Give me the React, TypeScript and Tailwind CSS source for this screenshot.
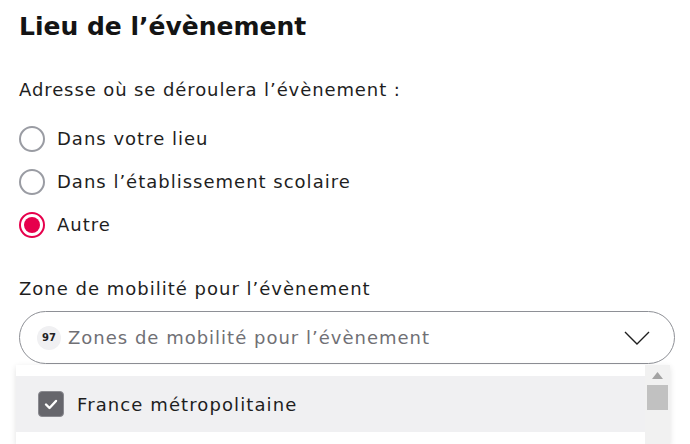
import React from "react";

const font = { fontFamily: '"DejaVu Sans", "Open Sans", sans-serif' };

function Radio({ label, checked }: { label: string; checked?: boolean }) {
  return (
    <label className="flex items-center gap-[12px] h-[43px] cursor-pointer">
      <span
        className={
          checked
            ? "w-[26px] h-[26px] rounded-full border-2 border-[#e6004c] flex items-center justify-center"
            : "w-[26px] h-[26px] rounded-full border-2 border-[#9a9ca3]"
        }
      >
        {checked && <span className="w-[16px] h-[16px] rounded-full bg-[#e6004c]" />}
      </span>
      <span className="text-[18px] tracking-[1px] text-[#1e1e1e]">{label}</span>
    </label>
  );
}

export default function App() {
  return (
    <div className="w-[690px] h-[444px] overflow-hidden bg-white text-[#1e1e1e]" style={font}>
      <div className="pl-[19px] pr-[15px] pt-[9px]">
        <h2 className="text-[25px] font-bold text-[#141414] leading-[36px]">Lieu de l’évènement</h2>

        <p className="mt-[32px] text-[18px] tracking-[0.9px] leading-[26px]">Adresse où se déroulera l’évènement :</p>

        <div className="mt-[14px] flex flex-col">
          <Radio label="Dans votre lieu" />
          <Radio label="Dans l’établissement scolaire" />
          <Radio label="Autre" checked />
        </div>

        <p className="mt-[30px] text-[18px] tracking-[1px] leading-[26px]">Zone de mobilité pour l’évènement</p>

        <div className="relative mt-[9px]">
          <div className="h-[53px] rounded-full border border-[#8e9096] flex items-center pl-[17px] pr-[24px]">
            <span className="w-[24px] h-[24px] rounded-full bg-[#f0f0f2] text-[10px] font-bold text-[#222] flex items-center justify-center">
              97
            </span>
            <span className="ml-[7px] flex-1 text-[18px] tracking-[1px] text-[#707075]">Zones de mobilité pour l’évènement</span>
            <svg width="26" height="14" viewBox="0 0 26 14" fill="none" stroke="#1e1e1e" strokeWidth="1.4">
              <polyline points="1,1 13,13 25,1" />
            </svg>
          </div>

          <div className="ml-[-3px] mr-[5px] mt-[1px] flex shadow-[0_2px_6px_rgba(0,0,0,0.12)]">
            <div className="flex-1 bg-white pt-[11px] h-[80px]">
              <div className="h-[56px] bg-[#f0f0f2] flex items-center pl-[22px] gap-[13px]">
                <span className="w-[26px] h-[26px] rounded-[4px] bg-[#66666c] border border-[#8a8a90] flex items-center justify-center">
                  <svg width="14" height="11" viewBox="0 0 14 11" fill="none" stroke="white" strokeWidth="2.4" strokeLinecap="round" strokeLinejoin="round">
                    <polyline points="2,5.5 5.5,9 12,2" />
                  </svg>
                </span>
                <span className="text-[18px] tracking-[1.1px] text-[#1e1e1e]">France métropolitaine</span>
              </div>
            </div>
            <div className="w-[25px] bg-[#f1f1f1] flex flex-col items-center">
              <svg className="mt-[7px]" width="11" height="7" viewBox="0 0 11 7">
                <polygon points="5.5,0 11,7 0,7" fill="#a3a3a3" />
              </svg>
              <div className="mt-[6px] w-[21px] h-[25px] bg-[#c1c1c1]" />
            </div>
          </div>
        </div>
      </div>
    </div>
  );
}
